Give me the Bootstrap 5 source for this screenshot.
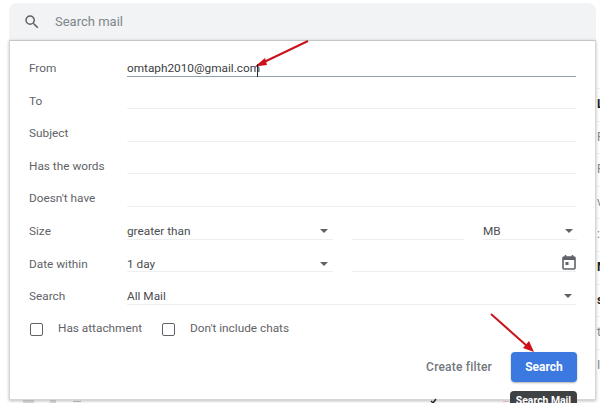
<!DOCTYPE html>
<html lang="en">
<head>
<meta charset="utf-8">
<title>Search mail</title>
<link rel="stylesheet" href="https://cdn.jsdelivr.net/npm/bootstrap@5.3.0/dist/css/bootstrap.min.css">
<style>
html,body{width:600px;height:403px;overflow:hidden;background:#fff;}
body{position:relative;font-family:Roboto,"Liberation Sans",sans-serif;font-size:11.8px;color:#5f6368;letter-spacing:0;}
.search-top{margin:3px 4px 0 9px;height:37px;background:#f1f3f4;border-radius:8px 8px 0 0;padding:1px 0 0 14px;gap:14px;color:#80868b;font-size:13px;}
.adv-panel{position:relative;z-index:2;margin:0 4px 0 9px;width:587px;height:360px;background:#fff;border:1px solid #d4d6d8;border-top-color:#c4c6c8;box-shadow:0 1px 3px rgba(60,64,67,.35);padding:3px 19px 0 19px;}
.adv-row{height:32.6px;}
.adv-label{width:98px;flex:none;padding-top:16px;height:100%;}
.adv-field{flex:1 1 0;min-width:0;height:100%;border-bottom:1px solid #eeeff0;color:#4a4d50;padding-top:16px;position:relative;}
.adv-field.active{border-bottom-color:#8fa3b3;color:#3c4043;}
.w-sel{flex:0 0 206px;}
.w-num{flex:0 0 112px;margin-left:19px;}
.w-unit{flex:0 0 94px;margin-left:19px;}
.w-date{margin-left:19px;}
.car{position:absolute;right:5px;top:22px;width:0;height:0;border-left:4px solid transparent;border-right:4px solid transparent;border-top:4px solid #5f6368;}
.car-end{right:4px;}
.cal-ico{position:absolute;right:0;top:14px;}
.check-row{height:47px;padding:2px 0 0 1px;}
.box{width:13px;height:13px;border:1.6px solid #5f6368;border-radius:2px;flex:none;}
.check-a{width:119px;padding-left:15px;}
.check-b{padding-left:15px;}
.flt-link{font-weight:500;color:#73777b;font-size:12px;margin-right:19px;letter-spacing:.2px;}
.go-btn{width:66px;height:30px;padding:0;margin-right:-1px;background:#3b78e0;border:0;border-radius:4px;color:#fff;font-weight:700;font-size:12px;box-shadow:0 1px 2px rgba(60,64,67,.4);}
.go-btn:hover{background:#3b78e0;color:#fff;}
.tip-box{position:absolute;z-index:3;left:510px;top:391px;width:67px;height:20px;background:#3f4245;border-radius:4px 4px 0 0;color:#fff;font-weight:700;font-size:10.4px;line-height:15px;text-align:center;padding-top:2px;}
.mail-strip{position:absolute;left:597px;top:88px;width:10px;font-size:12px;color:#80868b;line-height:1;}
.mail-strip div{height:32.6px;border-top:1px solid #eee;padding-top:9px;}
.mail-strip .unread{color:#202124;font-weight:700;}
.arrow-layer{position:absolute;left:0;top:0;z-index:4;pointer-events:none;}
.foot-strip{position:absolute;left:23px;top:400px;}
</style>
</head>
<body>
<div class="search-top d-flex align-items-center">
<svg width="18" height="18" viewBox="0 0 24 24" fill="#5f6368"><path d="M15.5 14h-.79l-.28-.27A6.47 6.47 0 0 0 16 9.5 6.5 6.5 0 1 0 9.5 16c1.61 0 3.09-.59 4.23-1.57l.27.28v.79l5 4.99L20.49 19l-4.99-5zm-6 0C7.01 14 5 11.99 5 9.5S7.01 5 9.5 5 14 7.01 14 9.5 11.99 14 9.5 14z"/></svg>
<span>Search mail</span>
</div>
<div class="adv-panel">
<div class="adv-row d-flex"><div class="adv-label">From</div><div class="adv-field active">omtaph2010@gmail.com</div></div>
<div class="adv-row d-flex"><div class="adv-label">To</div><div class="adv-field"></div></div>
<div class="adv-row d-flex"><div class="adv-label">Subject</div><div class="adv-field"></div></div>
<div class="adv-row d-flex"><div class="adv-label">Has the words</div><div class="adv-field"></div></div>
<div class="adv-row d-flex"><div class="adv-label">Doesn't have</div><div class="adv-field"></div></div>
<div class="adv-row d-flex"><div class="adv-label">Size</div>
<div class="adv-field w-sel">greater than<span class="car"></span></div>
<div class="adv-field w-num"></div>
<div class="adv-field w-unit">MB<span class="car car-end"></span></div></div>
<div class="adv-row d-flex"><div class="adv-label">Date within</div>
<div class="adv-field w-sel">1 day<span class="car"></span></div>
<div class="adv-field w-date"><svg class="cal-ico" width="14" height="16" viewBox="0 0 14 16" fill="none"><path d="M3.5 1v3M10.5 1v3" stroke="#5f6368" stroke-width="1.6"/><rect x="1" y="3" width="12" height="12" rx="1" stroke="#5f6368" stroke-width="1.6"/><rect x="1" y="3" width="12" height="3" fill="#5f6368"/><rect x="3.5" y="8" width="3" height="3" fill="#5f6368"/></svg></div></div>
<div class="adv-row d-flex"><div class="adv-label">Search</div><div class="adv-field">All Mail<span class="car car-end"></span></div></div>
<div class="check-row d-flex align-items-center">
<span class="box"></span><span class="check-a">Has attachment</span>
<span class="box"></span><span class="check-b">Don't include chats</span>
</div>
<div class="d-flex justify-content-end align-items-center">
<span class="flt-link">Create filter</span>
<button type="button" class="btn go-btn">Search</button>
</div>
</div>
<div class="tip-box">Search Mail</div>
<div class="mail-strip">
<div class="unread">L</div><div>R</div><div>R</div><div>v</div><div>:</div><div class="unread">M</div><div class="unread">s</div><div>t</div><div>I</div>
</div>
<svg class="foot-strip" width="60" height="3" viewBox="0 0 60 3"><rect x="0" y="0" width="11" height="3" fill="#dadce0"/><rect x="27" y="0" width="6" height="3" fill="#dadce0"/><rect x="50" y="1" width="8" height="1" fill="#bdc1c6"/></svg>
<svg class="arrow-layer" width="600" height="403" viewBox="0 0 600 403">
<line x1="308" y1="41" x2="262" y2="63" stroke="#c8141c" stroke-width="2"/>
<polygon points="255,66.5 265,58 267,65" fill="#d01018"/>
<line x1="257.5" y1="64" x2="257.5" y2="77" stroke="#2b2b2b" stroke-width="1"/>
<line x1="491" y1="314" x2="527" y2="346" stroke="#c8141c" stroke-width="2"/>
<polygon points="534,352 523,348 529,341" fill="#d01018"/>
<path d="M431 401l2 2 3-4" stroke="#222" stroke-width="1.4" fill="none"/>
<line x1="503" y1="401.5" x2="509" y2="401.5" stroke="#e8b4b4" stroke-width="1"/>
</svg>
</body>
</html>
